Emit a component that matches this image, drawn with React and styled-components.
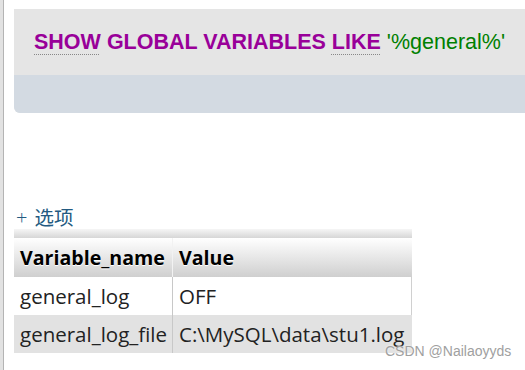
import React from "react";
import styled, { createGlobalStyle } from "styled-components";

const GlobalStyle = createGlobalStyle`
  html, body {
    margin: 0;
    padding: 0;
    background: #fff;
  }
`;

const rows = [
  { name: "general_log", value: "OFF" },
  { name: "general_log_file", value: "C:\\MySQL\\data\\stu1.log" },
];

export default function App() {
  return (
    <>
      <GlobalStyle />
      <Frame>
        <Content>
          <QueryPanel>
            <QueryText>
              <span>
                <Keyword dotted>SHOW</Keyword> <Keyword>GLOBAL VARIABLES</Keyword>{" "}
                <Keyword dotted>LIKE</Keyword> <Str>'%general%'</Str>
              </span>
            </QueryText>
            <QueryFooter />
          </QueryPanel>

          <Options>
            <span className="plus">+</span>选项
          </Options>

          <Table>
            <Strip />
            <HeadRow>
              <HeadCell width={159}>Variable_name</HeadCell>
              <HeadCell>Value</HeadCell>
            </HeadRow>
            {rows.map((row, index) => (
              <Row key={row.name} odd={index % 2 === 1}>
                <Cell width={159}>{row.name}</Cell>
                <Cell>{row.value}</Cell>
              </Row>
            ))}
          </Table>
        </Content>
        <Watermark>CSDN @Nailaoyyds</Watermark>
      </Frame>
    </>
  );
}

const Frame = styled.div`
  position: relative;
  width: 525px;
  height: 370px;
  overflow: hidden;
  border-left: 3px solid #e2e2e2;
  box-sizing: border-box;
`;

const Content = styled.div`
  height: 100%;
  border-left: 1px solid #b4b4b4;
  padding: 9px 0 0 10px;
  box-sizing: border-box;
`;

const QueryPanel = styled.div`
  background: #e5e5e5;
  border-bottom-left-radius: 6px;
  overflow: hidden;
`;

const QueryText = styled.div`
  height: 66px;
  padding-left: 20px;
  display: flex;
  align-items: center;
  font-family: "Liberation Sans", Arial, sans-serif;
  font-size: 21.5px;
  white-space: pre;
  padding-top: 1px;
  box-sizing: border-box;
`;

const Keyword = styled.span`
  color: #990099;
  font-weight: bold;
  text-decoration: ${(p) => (p.dotted ? "underline dotted #888" : "none")};
  text-decoration-thickness: 1px;
  text-underline-offset: 5px;
`;

const Str = styled.span`
  color: #008000;
`;

const QueryFooter = styled.div`
  height: 38px;
  background: #d3dae2;
`;

const Options = styled.div`
  margin-top: 93px;
  height: 22px;
  padding-left: 2px;
  font-family: "Noto Sans CJK SC", "Noto Sans", sans-serif;
  font-size: 19.5px;
  line-height: 22px;
  color: #235a81;

  .plus {
    font-family: "Open Sans", sans-serif;
    font-weight: 300;
    font-size: 20px;
    margin-right: 7px;
  }
`;

const Table = styled.div`
  margin-top: 1px;
  width: 398px;
  font-family: "Open Sans", "Noto Sans", sans-serif;
  font-size: 20.5px;
`;

const Strip = styled.div`
  height: 9px;
  background: linear-gradient(#f6f6f6, #d6d6d6);
`;

const HeadRow = styled.div`
  display: flex;
  height: 39px;
  background: linear-gradient(#ffffff, #cfcfcf);
`;

const HeadCell = styled.div`
  width: ${(p) => (p.width ? `${p.width}px` : "auto")};
  flex: ${(p) => (p.width ? "none" : "1")};
  display: flex;
  align-items: center;
  padding-left: 6px;
  box-sizing: border-box;
  font-size: 19.6px;
  font-weight: bold;
  color: #000;
  text-shadow: 0 1px 0 #fff;
  border-right: ${(p) => (p.width ? "1px solid #f2f2f2" : "none")};
`;

const Row = styled.div`
  display: flex;
  height: 38px;
  background: ${(p) => (p.odd ? "#e2e2e2" : "#fff")};
  border-right: 1px solid ${(p) => (p.odd ? "#e2e2e2" : "#d0d0d0")};
`;

const Cell = styled.div`
  width: ${(p) => (p.width ? `${p.width}px` : "auto")};
  flex: ${(p) => (p.width ? "none" : "1")};
  display: flex;
  align-items: center;
  padding-left: 6px;
  box-sizing: border-box;
  color: #222;
  white-space: nowrap;
  border-right: ${(p) => (p.width ? "1px solid #c8c8c8" : "none")};
`;

const Watermark = styled.div`
  position: absolute;
  left: 382px;
  top: 343px;
  font-family: "Liberation Sans", Arial, sans-serif;
  font-size: 14px;
  color: #a0a0a0;
  text-shadow: 0 0 2px #fff;
`;
